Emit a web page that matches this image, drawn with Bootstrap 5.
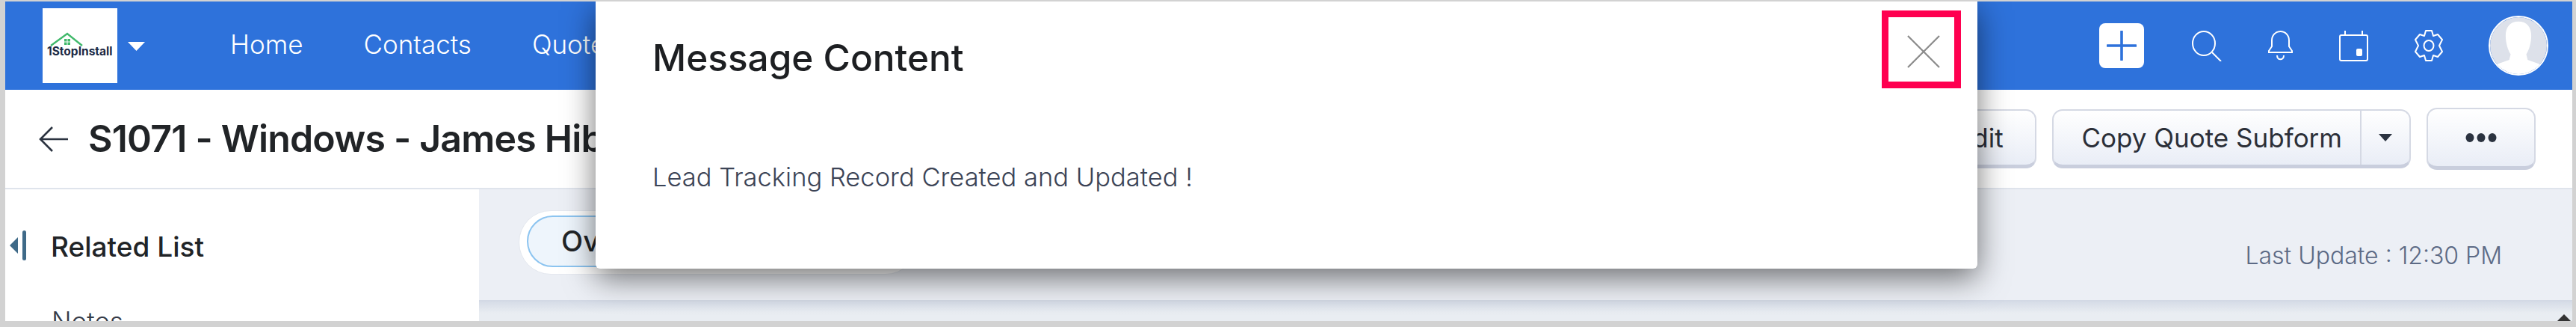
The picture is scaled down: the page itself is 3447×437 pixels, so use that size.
<!DOCTYPE html>
<html>

<head>
  <meta charset="utf-8">
  <meta name="viewport" content="width=device-width">
  <title>Message Content</title>
  <link href="https://cdn.jsdelivr.net/npm/bootstrap@5.3.3/dist/css/bootstrap.min.css" rel="stylesheet" />
  <style>
    html, body { height: 437px; overflow: hidden; }
    body { background: #d2d2d2; font-family: Inter, "Liberation Sans", sans-serif; padding: 2px 5px 8px 7px; }
    .app-frame { position: relative; height: 427px; overflow: hidden; background: #fff; }

    .top-bar { height: 118px; background: #2e72db; padding: 0 32px 0 50px; flex-wrap: nowrap; flex-shrink: 0; }
    .logo-box { width: 100px; height: 100px; background: #fff; display: block; }
    .logo-caret { width: 23px; height: 12px; margin: 2px 114px 0 14px; }
    .top-links { gap: 81px; margin-top: -3px; }
    .top-links a { color: #fff; font-size: 35px; font-weight: 300; text-decoration: none; line-height: 1; }
    .top-tools svg { display: block; }
    .add-tile { width: 60px; height: 60px; background: #fff; border-radius: 8px; margin-right: 64px; }
    .tool-gap { margin-right: 61px; }
    .avatar-tile { width: 80px; height: 80px; border-radius: 50%; overflow: hidden; border: 2px solid #fff; margin-left: -1px; }

    .title-row { height: 133px; border-bottom: 2px solid #dfe4ec; padding: 0 49px 0 45px; flex-shrink: 0; }
    .back-arrow { margin-right: 27px; }
    .rec-title { font-size: 50px; font-weight: 600; color: #212427; line-height: 1; margin: -2px 0 0; white-space: nowrap; letter-spacing: -.8px; }
    .act-row { gap: 21px; }
    .act-btn { height: 79px; border: 2px solid #d5d9e4; border-bottom: 5px solid #c9cedd; border-radius: 14px; background: linear-gradient(#fff, #e9edf6); color: #2b2f38; font-size: 35px; font-weight: 400; padding: 0; }
    .act-main { padding: 0 24px 0 38px; }
    .act-split { width: 66px; border-left: 2px solid #d5d9e4; height: 100%; }
    .act-more { width: 146px; height: 83px; }
    .act-edit { width: 170px; padding-left: 20px; }

    .work-area { flex: 1; min-height: 0; }
    .side-panel { width: 634px; background: #fff; flex-shrink: 0; padding-left: 6px; }
    .side-head { height: 150px; margin-bottom: 9px; }
    .side-title { font-size: 37px; font-weight: 500; color: #212427; margin: 2px 0 0 33px; line-height: 1; }
    .side-link { font-size: 35px; font-weight: 300; color: #343a47; padding-left: 56px; line-height: 1; }

    .main-pane { flex: 1; min-width: 0; background: #eceff5; }
    .main-head { height: 150px; padding: 0 94px 0 53px; border-bottom: 2px solid #d3d9e5; }
    .pill-outer { width: 534px; height: 86px; margin-top: -7px; background: #fff; border: 1px solid #e4e8ef; border-radius: 43px; padding: 6px 10px; }
    .pill-active { width: 244px; height: 69px; background: #eef5fc; border: 2px solid #8cc4f0; border-radius: 35px; font-size: 38px; font-weight: 500; color: #212427; padding-left: 44px; }
    .update-time { font-size: 32px; font-weight: 300; color: #5c6a85; padding-top: 30px; }
    .main-foot { height: 26px; background: linear-gradient(#d6dce7, #e9edf2 60%); position: relative; }
    .scroll-mark { position: absolute; right: 2px; bottom: 0; width: 0; height: 0; border: 9px solid transparent; border-top: 0; border-bottom: 9px solid #333; }

    .msg-box { position: absolute; left: 790px; top: 0; width: 1849px; height: 357px; background: #fff; border-radius: 0 0 6px 6px; box-shadow: 0 12px 42px rgba(0, 0, 0, .55); padding: 0 76px; }
    .msg-title { font-size: 49.5px; font-weight: 500; color: #1d1f22; line-height: 1; margin: 0; padding-top: 51px; }
    .msg-text { font-size: 34.5px; font-weight: 300; color: #3c4456; line-height: 1; margin: 0; padding-top: 117px; }
    .msg-close { position: absolute; left: 1721px; top: 12px; width: 106px; height: 104px; border: 9px solid #ff0050; background: #fff; padding: 6px 0 0 6px; border-radius: 0; }
  </style>
</head>

<body>
  <div class="app-frame d-flex flex-column">
    <nav class="navbar top-bar">
      <div class="d-flex align-items-center">
        <svg class="logo-box" viewBox="0 0 100 100">
          <path d="M11 50 33 34 53 50" fill="none" stroke="#41b96b" stroke-width="2.4" />
          <rect x="29" y="41" width="8" height="8" fill="#41b96b" />
          <path d="M33 41v8M29 45h8" stroke="#fff" stroke-width="1" />
          <text x="6" y="63" font-family="Inter, sans-serif" font-size="15.5" font-weight="700" fill="#1c2a45">1StopInstall</text>
        </svg>
        <svg class="logo-caret" viewBox="0 0 23 12"><path d="M0 0h23L11.5 12z" fill="#fff" /></svg>
        <div class="top-links d-flex">
          <a href="#">Home</a>
          <a href="#">Contacts</a>
          <a href="#">Quotes</a>
        </div>
      </div>
      <div class="top-tools d-flex align-items-center">
        <div class="add-tile d-flex align-items-center justify-content-center">
          <svg width="40" height="40" viewBox="0 0 40 40"><path d="M20 1v38M1 20h38" stroke="#2e72db" stroke-width="3.6" stroke-linecap="round" /></svg>
        </div>
        <svg class="tool-gap" width="40" height="41" viewBox="0 0 40 41" fill="none" stroke="#fff" stroke-width="2">
          <ellipse cx="16" cy="17" rx="15" ry="16" /><path d="M27 29 39 41" />
        </svg>
        <svg class="tool-gap" width="35" height="41" viewBox="0 0 35 41" fill="none" stroke="#fff" stroke-width="2">
          <path d="M6 21V13C6 6 11 1 17.5 1S29 6 29 13v8l4 6v2H2v-2z" /><path d="M13 33c0 7 9 7 9 0" />
        </svg>
        <svg class="tool-gap" width="39" height="41" viewBox="0 0 39 41" fill="none" stroke="#fff" stroke-width="2">
          <rect x="1" y="6" width="37" height="34" rx="2" /><path d="M8 0v6M31 0v6" /><rect x="23" y="24" width="8" height="10" rx="2" fill="#fff" stroke="none" />
        </svg>
        <svg class="tool-gap" width="40" height="42" viewBox="0 0 40 42" fill="none" stroke="#fff" stroke-width="2">
          <path d="M16 1h8l2 7 6-2 6 7-4 8 4 8-6 7-6-2-2 7h-8l-2-7-6 2-6-7 4-8-4-8 6-7 6 2z" stroke-linejoin="round" /><ellipse cx="20" cy="21" rx="6.5" ry="7" />
        </svg>
        <svg class="avatar-tile" viewBox="0 0 80 80">
          <rect width="80" height="80" fill="#dde1ea" />
          <path d="M40 6c12 0 18 8 18 20 0 10-3 20-7 26l2 8 17 6 8 14H2l8-14 17-6 2-8c-4-6-7-16-7-26C22 14 28 6 40 6z" fill="#fff" />
        </svg>
      </div>
    </nav>

    <div class="title-row d-flex align-items-center justify-content-between">
      <div class="d-flex align-items-center">
        <svg class="back-arrow" width="39" height="34" viewBox="0 0 39 34" fill="none" stroke="#2b3340" stroke-width="2.6">
          <path d="M18 1 2 17l16 16M2 17h37" />
        </svg>
        <h1 class="rec-title">S1071 - Windows - James Hibbert</h1>
      </div>
      <div class="act-row d-flex align-items-center">
        <button class="btn act-btn act-edit" type="button">Edit</button>
        <div class="btn-group act-btn d-flex align-items-center">
          <span class="act-main">Copy Quote Subform</span>
          <span class="act-split d-flex align-items-center justify-content-center">
            <svg width="18" height="10" viewBox="0 0 18 10"><path d="M0 0h18L9 10z" fill="#2b3340" /></svg>
          </span>
        </div>
        <button class="btn act-btn act-more d-flex align-items-center justify-content-center" type="button">
          <svg width="42" height="12" viewBox="0 0 42 12" fill="#2b3340"><ellipse cx="6" cy="6" rx="5.5" ry="6" /><ellipse cx="21" cy="6" rx="5.5" ry="6" /><ellipse cx="36" cy="6" rx="5.5" ry="6" /></svg>
        </button>
      </div>
    </div>

    <div class="work-area d-flex">
      <aside class="side-panel">
        <div class="side-head d-flex align-items-center">
          <svg width="22" height="40" viewBox="0 0 22 40"><path d="M11 9v22L0 20z" fill="#3f6a88" /><rect x="17" y="0" width="5" height="40" rx="2.5" fill="#3f6a88" /></svg>
          <span class="side-title">Related List</span>
        </div>
        <div class="side-link">Notes</div>
      </aside>
      <section class="main-pane d-flex flex-column">
        <div class="main-head d-flex align-items-center justify-content-between flex-shrink-0">
          <div class="pill-outer flex-shrink-0">
            <div class="pill-active d-flex align-items-center">Overview</div>
          </div>
          <span class="update-time">Last Update : 12:30 PM</span>
        </div>
        <div class="main-foot flex-grow-1"><span class="scroll-mark"></span></div>
      </section>
    </div>

    <div class="msg-box">
      <h2 class="msg-title">Message Content</h2>
      <p class="msg-text">Lead Tracking Record Created and Updated !</p>
      <button class="msg-close d-flex align-items-center justify-content-center" type="button" aria-label="Close">
        <svg width="44" height="44" viewBox="0 0 44 44"><path d="M1 1 43 43M43 1 1 43" stroke="#8b8b8b" stroke-width="2.2" /></svg>
      </button>
    </div>
  </div>
  <script src="https://cdn.jsdelivr.net/npm/bootstrap@5.3.3/dist/js/bootstrap.bundle.min.js"></script>
</body>

</html>
